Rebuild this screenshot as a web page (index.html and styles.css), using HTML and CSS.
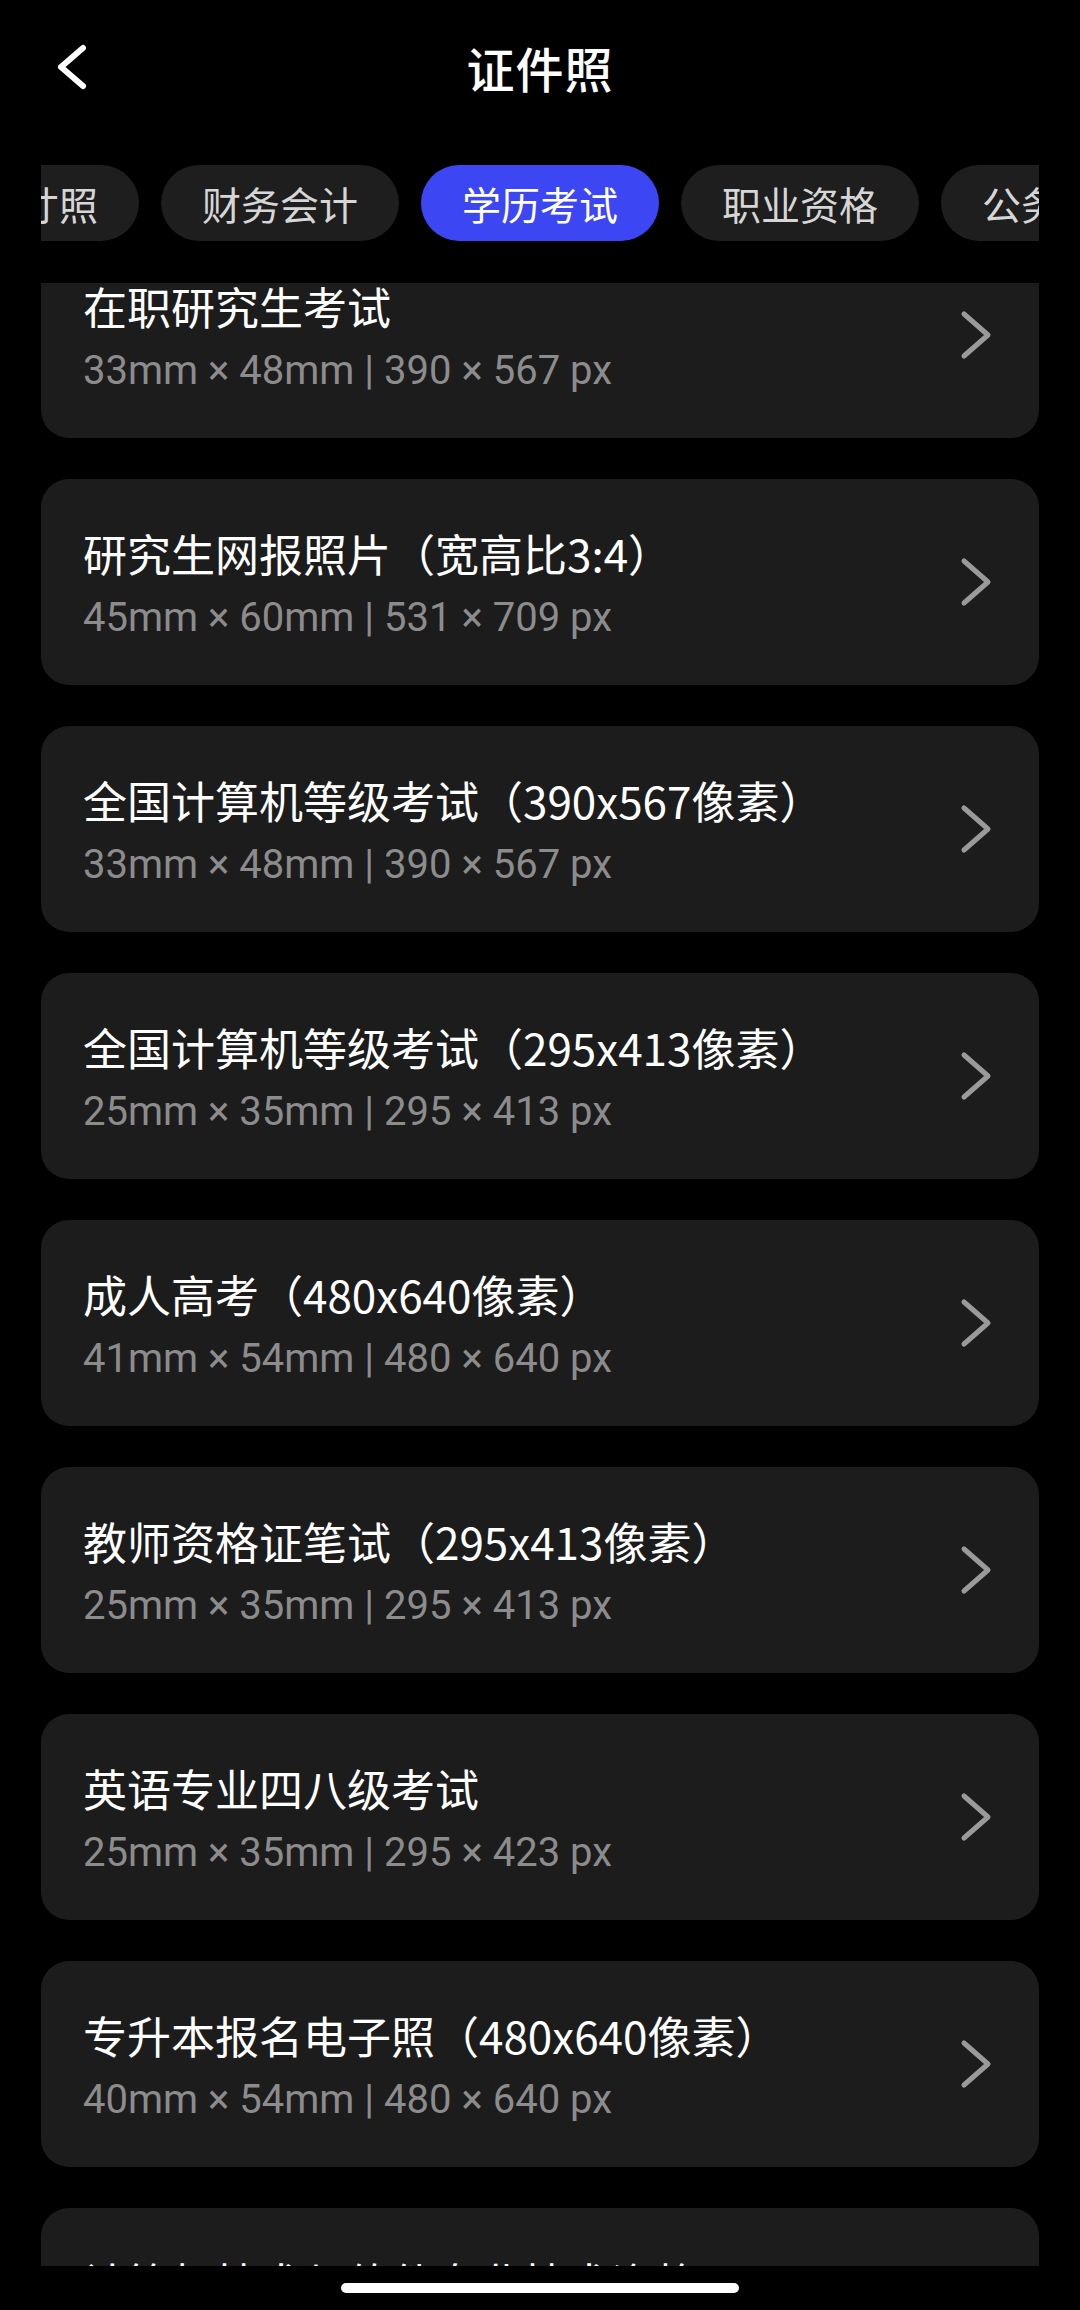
FILE: index.html
```html
<!DOCTYPE html>
<html lang="zh-CN">

<head>
    <meta charset="UTF-8">
    <meta name="viewport" content="width=device-width, initial-scale=1.0">
    <title>证件照</title>
    <link rel="stylesheet" href="styles.css">
</head>

<body>
    <header class="topbar">
        <button class="back" aria-label="返回">
            <svg width="32" height="46" viewBox="0 0 32 46">
                <polyline points="27,4 5,23 27,42" fill="none" stroke="#fff" stroke-width="6" stroke-linecap="round" stroke-linejoin="round" />
            </svg>
        </button>
        <h1 class="title">证件照</h1>
        <span></span>
    </header>

    <nav class="tabs">
        <div class="tabs-track">
            <span class="tab first">常用寸照</span>
            <span class="tab">财务会计</span>
            <span class="tab active">学历考试</span>
            <span class="tab">职业资格</span>
            <span class="tab">公务员考试</span>
        </div>
    </nav>

    <main class="list">
        <div class="list-track">
            <a class="item">
                <div class="item-text">
                    <p class="item-name">在职研究生考试</p>
                    <p class="item-size">33mm × 48mm | 390 × 567 px</p>
                </div>
                <svg class="arrow" width="32" height="50" viewBox="0 0 32 50">
                    <polyline points="4,4 28,25 4,46" />
                </svg>
            </a>
            <a class="item">
                <div class="item-text">
                    <p class="item-name">研究生网报照片（宽高比3:4）</p>
                    <p class="item-size">45mm × 60mm | 531 × 709 px</p>
                </div>
                <svg class="arrow" width="32" height="50" viewBox="0 0 32 50">
                    <polyline points="4,4 28,25 4,46" />
                </svg>
            </a>
            <a class="item">
                <div class="item-text">
                    <p class="item-name">全国计算机等级考试（390x567像素）</p>
                    <p class="item-size">33mm × 48mm | 390 × 567 px</p>
                </div>
                <svg class="arrow" width="32" height="50" viewBox="0 0 32 50">
                    <polyline points="4,4 28,25 4,46" />
                </svg>
            </a>
            <a class="item">
                <div class="item-text">
                    <p class="item-name">全国计算机等级考试（295x413像素）</p>
                    <p class="item-size">25mm × 35mm | 295 × 413 px</p>
                </div>
                <svg class="arrow" width="32" height="50" viewBox="0 0 32 50">
                    <polyline points="4,4 28,25 4,46" />
                </svg>
            </a>
            <a class="item">
                <div class="item-text">
                    <p class="item-name">成人高考（480x640像素）</p>
                    <p class="item-size">41mm × 54mm | 480 × 640 px</p>
                </div>
                <svg class="arrow" width="32" height="50" viewBox="0 0 32 50">
                    <polyline points="4,4 28,25 4,46" />
                </svg>
            </a>
            <a class="item">
                <div class="item-text">
                    <p class="item-name">教师资格证笔试（295x413像素）</p>
                    <p class="item-size">25mm × 35mm | 295 × 413 px</p>
                </div>
                <svg class="arrow" width="32" height="50" viewBox="0 0 32 50">
                    <polyline points="4,4 28,25 4,46" />
                </svg>
            </a>
            <a class="item">
                <div class="item-text">
                    <p class="item-name">英语专业四八级考试</p>
                    <p class="item-size">25mm × 35mm | 295 × 423 px</p>
                </div>
                <svg class="arrow" width="32" height="50" viewBox="0 0 32 50">
                    <polyline points="4,4 28,25 4,46" />
                </svg>
            </a>
            <a class="item">
                <div class="item-text">
                    <p class="item-name">专升本报名电子照（480x640像素）</p>
                    <p class="item-size">40mm × 54mm | 480 × 640 px</p>
                </div>
                <svg class="arrow" width="32" height="50" viewBox="0 0 32 50">
                    <polyline points="4,4 28,25 4,46" />
                </svg>
            </a>
            <a class="item">
                <div class="item-text">
                    <p class="item-name">计算机技术与软件专业技术资格</p>
                    <p class="item-size">25mm × 35mm | 295 × 413 px</p>
                </div>
                <svg class="arrow" width="32" height="50" viewBox="0 0 32 50">
                    <polyline points="4,4 28,25 4,46" />
                </svg>
            </a>
        </div>
    </main>

    <div class="home-bar"></div>
</body>

</html>
```

FILE: styles.css
```css
html {
    font-family: 'Noto Sans CJK SC', 'Noto Sans', sans-serif;
    background: #000;
    color: #fff;
}

body {
    margin: 0;
    width: 1080px;
    height: 2310px;
    overflow: hidden;
    background: #000;
}

p,
h1 {
    margin: 0;
}

/* top bar */
.topbar {
    display: grid;
    grid-template-columns: 1fr auto 1fr;
    align-items: center;
    height: 134px;
}

.back {
    justify-self: start;
    margin-left: 56px;
    padding: 0;
    border: none;
    background: none;
    display: flex;
}

.title {
    font-size: 48px;
    font-weight: 500;
    line-height: 134px;
    letter-spacing: 1px;
}

/* category tabs */
.tabs {
    margin: 31px 41px 0;
    overflow: hidden;
}

.tabs-track {
    display: flex;
    gap: 22px;
}

.tab {
    flex: none;
    height: 76px;
    line-height: 76px;
    padding: 0 41px;
    border-radius: 38px;
    background: #1e1e1e;
    color: #d6d6d6;
    font-size: 39px;
    white-space: nowrap;
}

.tab.first {
    margin-left: -140px;
}

.tab.active {
    background: #3c47f3;
    color: #fff;
}

/* size list */
.list {
    margin: 42px 41px 0;
    height: 1983px;
    overflow: hidden;
}

.list-track {
    margin-top: -51px;
}

.item {
    display: flex;
    align-items: center;
    height: 206px;
    margin-bottom: 41px;
    padding: 4px 47px 0 42px;
    border-radius: 28px;
    background: #1c1c1c;
    box-sizing: border-box;
}

.item-text {
    flex: 1;
    display: flex;
    flex-direction: column;
    gap: 12px;
    min-width: 0;
}

.item-name {
    font-size: 44px;
    line-height: 56px;
    color: #fff;
    white-space: nowrap;
}

.item-size {
    font-family: Roboto, 'Noto Sans CJK SC', sans-serif;
    font-size: 40px;
    line-height: 50px;
    color: #8c8c8c;
    white-space: nowrap;
}

.arrow {
    flex: none;
    margin-top: -4px;
}

.arrow polyline {
    fill: none;
    stroke: #9a9a9a;
    stroke-width: 5;
    stroke-linecap: round;
    stroke-linejoin: round;
}

/* gesture bar */
.home-bar {
    width: 398px;
    height: 10px;
    margin: 17px auto 0;
    border-radius: 5px;
    background: #fff;
}
```
